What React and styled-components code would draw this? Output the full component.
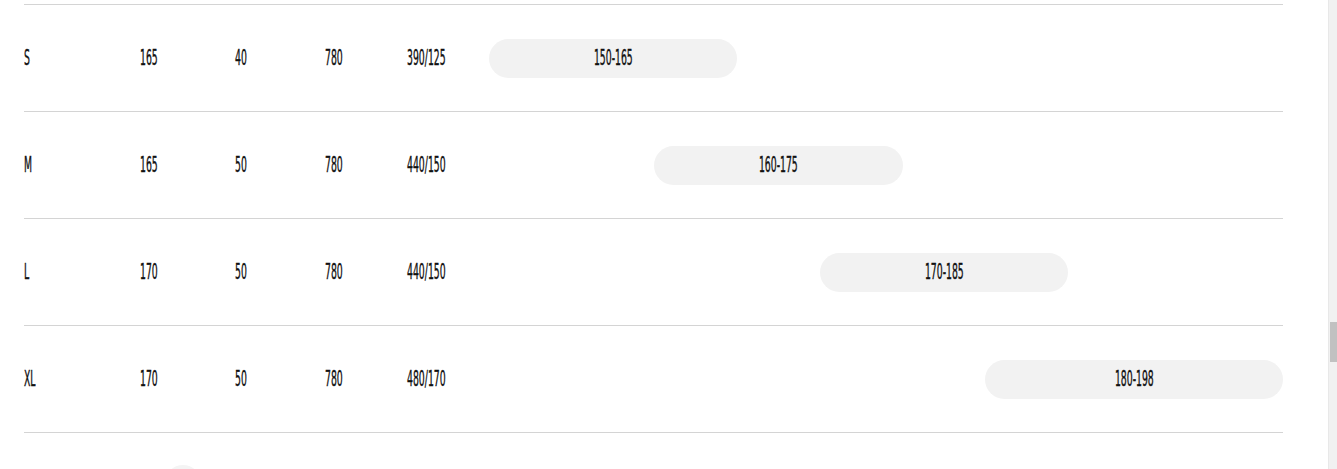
import React from 'react'
import styled, { createGlobalStyle } from 'styled-components'

const sizes = [
  { name: 'S', height: 165, depth: 40, length: 780, load: '390/125', min: 150, max: 165 },
  { name: 'M', height: 165, depth: 50, length: 780, load: '440/150', min: 160, max: 175 },
  { name: 'L', height: 170, depth: 50, length: 780, load: '440/150', min: 170, max: 185 },
  { name: 'XL', height: 170, depth: 50, length: 780, load: '480/170', min: 180, max: 198 },
]

const SCALE_MIN = 150
const SCALE_MAX = 198

const GlobalStyle = createGlobalStyle`
  html, body {
    margin: 0;
    height: 100%;
    overflow: hidden;
    background: #fff;
  }
`

const Page = styled.div`
  display: flex;
  height: 469px;
  overflow: hidden;
`

const Main = styled.main`
  flex: 1;
  padding: 4px 45px 0 24px;
`

const Table = styled.div`
  border-bottom: 1px solid #d4d4d4;
`

const Row = styled.div`
  display: grid;
  grid-template-columns: 116px 95px 90px 82px 82px 1fr;
  align-items: center;
  height: 106px;
  border-top: 1px solid #d4d4d4;
`

const Label = styled.span`
  display: inline-block;
  font-family: 'DejaVu Sans Condensed', 'DejaVu Sans', sans-serif;
  font-stretch: condensed;
  font-weight: 400;
  font-size: 22px;
  line-height: 1;
  color: #111;
  white-space: nowrap;
  -webkit-text-stroke: 0.4px #111;
  transform: scaleX(0.47);
  transform-origin: ${(p) => (p.$center ? 'center' : 'left')} center;
`

const Cell = styled.div`
  display: flex;
  align-items: center;
`

const Track = styled.div`
  display: flex;
  align-items: center;
`

const Pill = styled.div`
  height: 39px;
  border-radius: 20px;
  background: #f2f2f2;
  display: flex;
  align-items: center;
  justify-content: center;
`

const Footer = styled.div`
  padding: 32px 0 0 141px;
`

const Dot = styled.div`
  width: 36px;
  height: 36px;
  border-radius: 50%;
  background: #f4f4f4;
`

const Scrollbar = styled.aside`
  width: 7px;
  padding-left: 1px;
  background: #f1f1f1;
  border-left: 1px solid #e8e8e8;
  display: flex;
  flex-direction: column;
`

const Thumb = styled.div`
  margin-top: 322px;
  height: 40px;
  background: #c1c1c1;
`

const span = SCALE_MAX - SCALE_MIN

export default function App() {
  return (
    <>
      <GlobalStyle />
      <Page>
        <Main>
          <Table>
            {sizes.map((s) => (
              <Row key={s.name}>
                <Cell><Label>{s.name}</Label></Cell>
                <Cell><Label>{s.height}</Label></Cell>
                <Cell><Label>{s.depth}</Label></Cell>
                <Cell><Label>{s.length}</Label></Cell>
                <Cell><Label>{s.load}</Label></Cell>
                <Track>
                  <Pill
                    style={{
                      marginLeft: `${((s.min - SCALE_MIN) / span) * 100}%`,
                      width: `${((s.max - s.min) / span) * 100}%`,
                    }}
                  >
                    <Label $center>{`${s.min}-${s.max}`}</Label>
                  </Pill>
                </Track>
              </Row>
            ))}
          </Table>
          <Footer>
            <Dot />
          </Footer>
        </Main>
        <Scrollbar>
          <Thumb />
        </Scrollbar>
      </Page>
    </>
  )
}
